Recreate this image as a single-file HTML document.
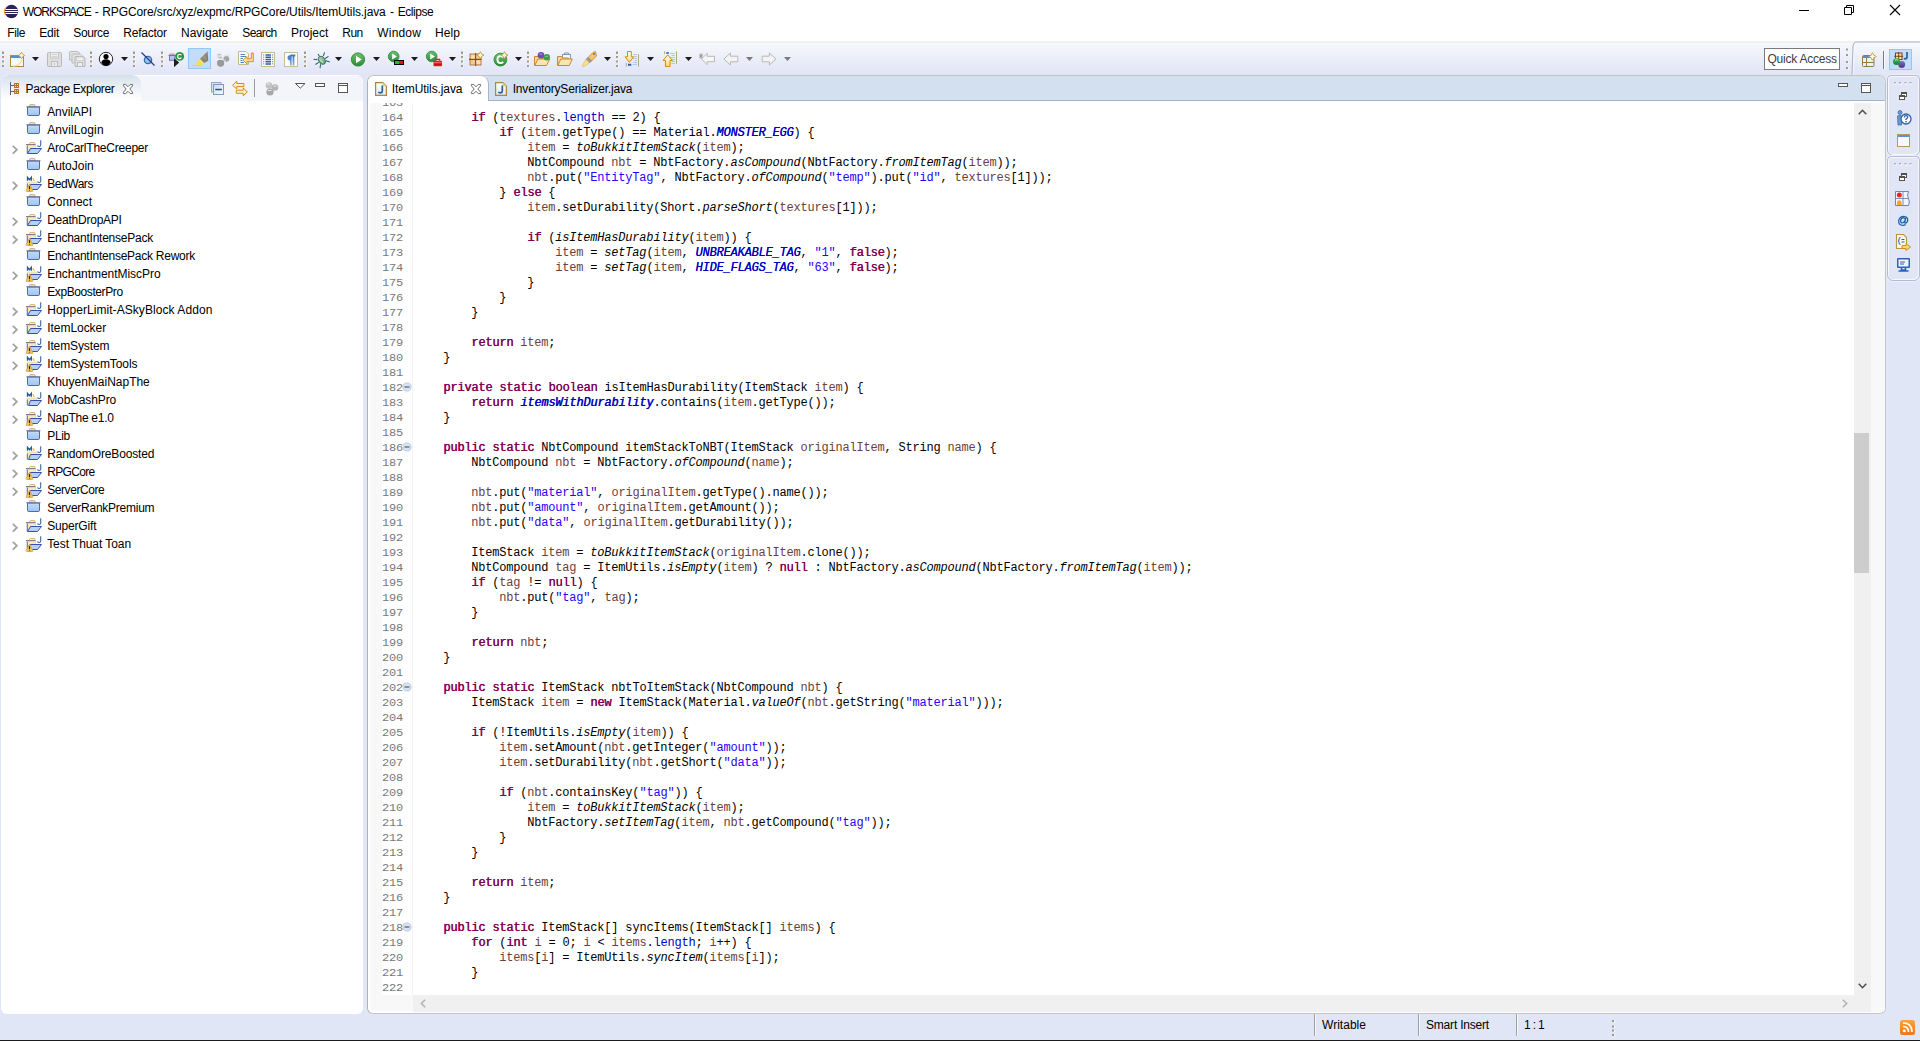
<!DOCTYPE html><html><head><meta charset="utf-8"><title>WORKSPACE - RPGCore/src/xyz/expmc/RPGCore/Utils/ItemUtils.java - Eclipse</title><style>
*{box-sizing:border-box;margin:0;padding:0}
html,body{width:1920px;height:1041px;overflow:hidden;background:#e1e6f6}
body{position:relative;font-family:"Liberation Sans",sans-serif;font-size:12px;color:#000;}
.a{position:absolute}
.t{position:absolute;white-space:pre;line-height:16px;height:16px}
svg{position:absolute;overflow:visible}
#titlebar{left:0;top:0;width:1920px;height:41px;background:#fff}
#toolbar{left:0;top:41px;width:1920px;height:34px;background:linear-gradient(#f1f1ef 0,#f1f1ef 2px,#f7f8fc 2px,#f2f4fc 8px,#ebeef9 18px,#e5e8f7 26px,#e1e5f5 34px)}
#pe{left:1px;top:75px;width:362px;height:939px;background:#fff;border-radius:7px 7px 6px 6px;overflow:hidden}
#pehead{left:0;top:0;width:362px;height:26px;background:#f4f5fb;border-top:1px solid #fcfcfe}
#petab{left:0;top:0;width:140px;height:26px;background:linear-gradient(#d6e0eb,#e6ecf3 35%,#f6f8fb 70%,#ffffff);border-radius:7px 9px 0 0}
#ed{left:367px;top:75px;width:1519px;height:939px;background:#fff;border:1px solid #c4c4c4;border-left-color:#b0b0b0;border-radius:7px 7px 6px 6px;overflow:hidden}
#edhead{left:0;top:0;width:1517px;height:25px;background:#d2e0f0;border-bottom:1px solid #a6b4cc}
#edtab{left:0;top:0;width:121px;height:25px;background:#fff;border-right:1px solid #a6b4cc;border-radius:0 8px 0 0}
#gutter{left:2px;top:27px;width:12px;height:892px;background:#f8f8f8}
#code{left:0;top:27px;width:1485px;height:892px;overflow:hidden}
.ln{position:absolute;left:14px;width:24px;height:15px;line-height:15px;font-family:"Liberation Mono",monospace;font-size:12px;letter-spacing:-0.2px;color:#787878;white-space:pre;transform:scaleY(0.910);transform-origin:0 10.700px}
.cl{position:absolute;left:47.300px;height:15px;line-height:15px;font-family:"Liberation Mono",monospace;font-size:12px;letter-spacing:-0.2px;color:#000;white-space:pre;tab-size:4}
.k{color:#7f0055;text-shadow:0.400px 0 0 #7f0055}
.s{color:#2a00ff}
.f{color:#0000c0}
.c{color:#0000c0;font-style:italic;text-shadow:0.400px 0 0 #0000c0}
.v{color:#6a3e3e}
.i{font-style:italic}
#vsb{left:1486px;top:27px;width:17px;height:892px;background:#f0f0f0}
#ovr{left:1503px;top:27px;width:14px;height:909px;background:#f8f8f8}
#hsb{left:45px;top:919px;width:1458px;height:17px;background:#f0f0f0}
#gutter2{left:2px;top:919px;width:43px;height:16px;background:#f8f8f8}
#thumb{left:1486px;top:357px;width:15px;height:140px;background:#cdcdcd}
#status{left:0;top:1014px;width:1920px;height:26px}
#bottomline{left:0;top:1040px;width:1920px;height:1px;background:#1b1b1b}
.tr{position:absolute;left:46px;height:18px;line-height:18px;white-space:pre}
.sep{position:absolute;width:1px;background:#a0a0a0}
</style></head><body><div class="a" id="titlebar"><svg style="left:3.5px;top:4px" width="16" height="16" viewBox="0 0 16 16"><circle cx="7.500" cy="7.500" r="6.700" fill="#2c2255"/><path d="M1.700 4Q-0.800 7.500 1.700 11" stroke="#f7941e" stroke-width="1.300" fill="none"/><path d="M1.600 5.500h12M1 7.500h13.200M1.600 9.500h12" stroke="#fff" stroke-width="1"/></svg><div class="t" style="left:22.7px;top:4px;letter-spacing:-1.014px;">WORKSPACE</div><div class="t" style="left:91.5px;top:4px;"> - </div><div class="t" style="left:102.3px;top:4px;letter-spacing:-0.107px;">RPGCore/src/xyz/expmc/RPGCore/Utils/ItemUtils.java</div><div class="t" style="left:386.7px;top:4px;"> - </div><div class="t" style="left:397.7px;top:4px;letter-spacing:-0.441px;">Eclipse</div><svg style="left:1794px;top:0" width="126" height="22" viewBox="0 0 126 22"><path d="M5 10.5h10" stroke="#000" stroke-width="1" fill="none"/><path d="M50.500 7.500h7v7h-7zM52.500 7.500v-2h7v7h-2" stroke="#000" stroke-width="1" fill="none"/><path d="M96 5l10 10M106 5l-10 10" stroke="#000" stroke-width="1.1" fill="none"/></svg><div class="t" style="left:7.3px;top:24.5px;letter-spacing:-0.411px;">File</div><div class="t" style="left:39.3px;top:24.5px;letter-spacing:-0.247px;">Edit</div><div class="t" style="left:73.3px;top:24.5px;letter-spacing:-0.389px;">Source</div><div class="t" style="left:123.3px;top:24.5px;letter-spacing:-0.245px;">Refactor</div><div class="t" style="left:181px;top:24.5px;letter-spacing:-0.009px;">Navigate</div><div class="t" style="left:242.3px;top:24.5px;letter-spacing:-0.605px;">Search</div><div class="t" style="left:291px;top:24.5px;letter-spacing:-0.008px;">Project</div><div class="t" style="left:342.3px;top:24.5px;letter-spacing:-0.539px;">Run</div><div class="t" style="left:377.3px;top:24.5px;letter-spacing:0.169px;">Window</div><div class="t" style="left:435px;top:24.5px;letter-spacing:0.078px;">Help</div></div><div class="a" id="toolbar"><svg style="left:1.5px;top:10px" width="3" height="17" viewBox="0 0 3 17"><rect x="0" y="0.5" width="2" height="2.5" fill="#a59c86"/><rect x="2" y="1.0" width="1" height="2.5" fill="#f8f9fd"/><rect x="0" y="5" width="2" height="2" fill="#a59c86"/><rect x="2" y="5.5" width="1" height="2" fill="#f8f9fd"/><rect x="0" y="9.5" width="2" height="2" fill="#a59c86"/><rect x="2" y="10.0" width="1" height="2" fill="#f8f9fd"/><rect x="0" y="14" width="2" height="2" fill="#a59c86"/><rect x="2" y="14.5" width="1" height="2" fill="#f8f9fd"/></svg><svg style="left:10px;top:10px" width="16" height="16" viewBox="0 0 16 16"><rect x="0.500" y="4.500" width="13" height="11" fill="#f4faff" stroke="#b08b3e"/><rect x="1" y="5" width="12" height="2" fill="#4f8fd6"/><path d="M3 15q7 0 9.500-6.500" stroke="#f4e2a4" stroke-width="1.500" fill="none"/><path d="M11.500 1.300l1.200 2l2 1.200l-2 1.200l-1.200 2l-1.200-2l-2-1.200l2-1.200z" fill="#fff8d8" stroke="#c39a2e" stroke-width="0.900"/></svg><svg style="left:32px;top:16px" width="7" height="4" viewBox="0 0 7 4"><path d="M0 0h7l-3.500 4z" fill="#1a1a1a"/></svg><svg style="left:47px;top:10px" width="16" height="16" viewBox="0 0 16 16"><path d="M1.500 1.500h12q1 0 1 1v12q0 1-1 1h-12q-1 0-1-1v-12q0-1 1-1z" fill="#dedede" stroke="#b8b8b8"/><rect x="3.500" y="1.500" width="8" height="5.500" fill="#ececec" stroke="#c6c6c6"/><path d="M5 3.500h5M5 5.500h5" stroke="#d2d2d2"/><rect x="4.500" y="10.500" width="6" height="5" fill="#e9e9e9" stroke="#bdbdbd"/><rect x="7" y="12" width="1" height="2" fill="#c0c0c0"/></svg><svg style="left:69px;top:10px" width="16" height="16" viewBox="0 0 16 16"><path d="M1 0.500h8l1.500 1.500v7h-10v-8z" fill="#e3e3e3" stroke="#bcbcbc"/><path d="M3.500 3h8l1.500 1.500v7.500h-10v-8.500z" fill="#e3e3e3" stroke="#bcbcbc"/><path d="M6.500 5.500h8l1.500 1.500v8.500h-10v-9.500z" fill="#dedede" stroke="#b5b5b5"/><rect x="8" y="6" width="6" height="3.500" fill="#efefef" stroke="#c8c8c8" stroke-width="0.600"/><rect x="8.500" y="11.500" width="5" height="4" fill="#ededed" stroke="#bdbdbd"/></svg><svg style="left:90.0px;top:10px" width="3" height="17" viewBox="0 0 3 17"><rect x="0" y="0.5" width="2" height="2.5" fill="#a59c86"/><rect x="2" y="1.0" width="1" height="2.5" fill="#f8f9fd"/><rect x="0" y="5" width="2" height="2" fill="#a59c86"/><rect x="2" y="5.5" width="1" height="2" fill="#f8f9fd"/><rect x="0" y="9.5" width="2" height="2" fill="#a59c86"/><rect x="2" y="10.0" width="1" height="2" fill="#f8f9fd"/><rect x="0" y="14" width="2" height="2" fill="#a59c86"/><rect x="2" y="14.5" width="1" height="2" fill="#f8f9fd"/></svg><svg style="left:98px;top:10px" width="16" height="16" viewBox="0 0 16 16"><circle cx="8" cy="8" r="6.700" fill="#fff" stroke="#2a2a2a" stroke-width="1"/><circle cx="8" cy="5.600" r="2.600" fill="#000"/><path d="M3.300 11.800q0.300-3.600 4.700-3.600t4.700 3.600q-1.800 2.900-4.700 2.900t-4.700-2.900z" fill="#000"/></svg><svg style="left:121px;top:16px" width="7" height="4" viewBox="0 0 7 4"><path d="M0 0h7l-3.500 4z" fill="#1a1a1a"/></svg><svg style="left:133.0px;top:10px" width="3" height="17" viewBox="0 0 3 17"><rect x="0" y="0.5" width="2" height="2.5" fill="#a59c86"/><rect x="2" y="1.0" width="1" height="2.5" fill="#f8f9fd"/><rect x="0" y="5" width="2" height="2" fill="#a59c86"/><rect x="2" y="5.5" width="1" height="2" fill="#f8f9fd"/><rect x="0" y="9.5" width="2" height="2" fill="#a59c86"/><rect x="2" y="10.0" width="1" height="2" fill="#f8f9fd"/><rect x="0" y="14" width="2" height="2" fill="#a59c86"/><rect x="2" y="14.5" width="1" height="2" fill="#f8f9fd"/></svg><svg style="left:140px;top:10px" width="16" height="16" viewBox="0 0 16 16"><circle cx="8" cy="9" r="3.600" fill="#9ec6e6" stroke="#2e6fb0" stroke-width="1.400"/><path d="M1.500 1.500L14.500 14.500" stroke="#2a3a8c" stroke-width="1.200"/></svg><svg style="left:161.0px;top:10px" width="3" height="17" viewBox="0 0 3 17"><rect x="0" y="0.5" width="2" height="2.5" fill="#a59c86"/><rect x="2" y="1.0" width="1" height="2.5" fill="#f8f9fd"/><rect x="0" y="5" width="2" height="2" fill="#a59c86"/><rect x="2" y="5.5" width="1" height="2" fill="#f8f9fd"/><rect x="0" y="9.5" width="2" height="2" fill="#a59c86"/><rect x="2" y="10.0" width="1" height="2" fill="#f8f9fd"/><rect x="0" y="14" width="2" height="2" fill="#a59c86"/><rect x="2" y="14.5" width="1" height="2" fill="#f8f9fd"/></svg><svg style="left:168px;top:10px" width="16" height="16" viewBox="0 0 16 16"><path d="M1.500 3h5" stroke="#d9a3ab" stroke-width="1.200"/><rect x="1.500" y="4.300" width="5.500" height="5" fill="#b7c3ec" stroke="#7d74b4"/><path d="M0.600 4.300h7.400" stroke="#6f679f"/><path d="M6 7.300v9l5.200-4.700z" fill="#1e1e1e"/><circle cx="11.700" cy="5.400" r="4.400" fill="#2f9a46"/><circle cx="11.700" cy="5.400" r="3.300" fill="none" stroke="#1f7a34" stroke-width="0.500"/><path d="M13.400 4.200q-0.600-1-1.800-1q-1.900 0-1.900 2.200t1.900 2.200q1.200 0 1.800-1" stroke="#fff" stroke-width="1.100" fill="none"/></svg><div class="a" style="left:188px;top:7px;width:23px;height:21px;background:#c3dcf8;border:1px solid #90c8f6"></div><svg style="left:192px;top:10px" width="16" height="16" viewBox="0 0 16 16"><defs><linearGradient id="gHL_8" x1="0" y1="0" x2="1" y2="1"><stop offset="0" stop-color="#a39c88"/><stop offset="1" stop-color="#7d7868"/></linearGradient></defs><path d="M15.700 0.200l0.600 9.600l-4.400 2.200l-4.100-4z" fill="url(#gHL_8)"/><path d="M12.200 5.300l1.600 3.400" stroke="#b8b29e" stroke-width="0.700"/><path d="M7.800 8l4.100 4l-2.100 2.600l-5.300 0.200l-0.700-2z" fill="#f8de55"/><path d="M8.500 9.500l2.500 2.500" stroke="#fcf0a0" stroke-width="0.800"/><path d="M0.300 14.500h9.500" stroke="#f2d040" stroke-width="1.200"/></svg><svg style="left:216px;top:10px" width="16" height="16" viewBox="0 0 16 16"><circle cx="3.300" cy="4.900" r="2.500" fill="#dedede"/><path d="M1.500 3.500h3.500" stroke="#bdbdbd" stroke-width="1"/><circle cx="10.400" cy="7.800" r="2.900" fill="#a3a3a3"/><path d="M9 4l1.200 1.400M11.500 3.500l1 1.500" stroke="#c8c8c8" stroke-width="0.900"/><path d="M8.300 8.800l1.500 1.200" stroke="#eef0f8" stroke-width="0.900"/><circle cx="4.600" cy="12.100" r="3.600" fill="#999"/><path d="M2.300 8.300h4.300" stroke="#f2f3f9" stroke-width="1.100"/><path d="M2.800 6.800h3.600" stroke="#a8a8a8" stroke-width="0.900"/></svg><svg style="left:238px;top:10px" width="16" height="16" viewBox="0 0 16 16"><path d="M0.500 0.500h7.500l2.500 2.500v10.500h-10z" fill="#fdfbf2" stroke="#c8b88a"/><path d="M2.500 3.500h4.500M2.500 5.500h5.500M2.500 7.500h2.500M2.500 9.500h2M2.500 11.500h3.500" stroke="#5b7fc2" stroke-width="1"/><path d="M13.300 2v5.800h-4.300v-2.300l-4 3.700l4 3.700v-2.300h6.300v-8.600z" fill="#fde3a0" stroke="#cc8a14" stroke-width="0.900" stroke-linejoin="round"/></svg><svg style="left:260px;top:10px" width="16" height="16" viewBox="0 0 16 16"><rect x="1.500" y="1.500" width="13" height="14" fill="#fdfcf6" stroke="#c9b98a"/><path d="M3.700 3.500v11M12.700 3.500v11" stroke="#3d6cc0" stroke-width="1" stroke-dasharray="1 1.200"/><path d="M5.500 4h5.500M5.500 6.250h5.500M5.500 8.500h5.500M5.500 10.750h5.500M5.500 13h5.500" stroke="#2f5cb0" stroke-width="1.500"/></svg><svg style="left:283px;top:10px" width="16" height="16" viewBox="0 0 16 16"><defs><linearGradient id="gPIL_12" x1="0" y1="0" x2="0" y2="1"><stop offset="0" stop-color="#3f78c4"/><stop offset="1" stop-color="#8fb4e0"/></linearGradient></defs><rect x="1.500" y="1.500" width="13" height="14" fill="#fdfdfb" stroke="#c9bc94"/><path d="M12.300 4.500H7.500M7.800 4.500v10M10.500 4.500v10" stroke="url(#gPIL_12)" stroke-width="1.800" fill="none"/><path d="M7.800 4q-3.300 0-3.300 2.700T7.800 9.400z" fill="#4a82c8"/></svg><svg style="left:304.0px;top:10px" width="3" height="17" viewBox="0 0 3 17"><rect x="0" y="0.5" width="2" height="2.5" fill="#a59c86"/><rect x="2" y="1.0" width="1" height="2.5" fill="#f8f9fd"/><rect x="0" y="5" width="2" height="2" fill="#a59c86"/><rect x="2" y="5.5" width="1" height="2" fill="#f8f9fd"/><rect x="0" y="9.5" width="2" height="2" fill="#a59c86"/><rect x="2" y="10.0" width="1" height="2" fill="#f8f9fd"/><rect x="0" y="14" width="2" height="2" fill="#a59c86"/><rect x="2" y="14.5" width="1" height="2" fill="#f8f9fd"/></svg><svg style="left:312px;top:10px" width="16" height="16" viewBox="0 0 16 16"><defs><linearGradient id="gBUG_13" x1="0" y1="0" x2="0" y2="1"><stop offset="0" stop-color="#a6cf9c"/><stop offset="1" stop-color="#6fae78"/></linearGradient></defs><g transform="rotate(-32 9.700 9)"><path d="M9.700 5V2M6.200 6.500l-3-2.500M13.200 6.500l3-2.500M6 9.500h-4M13.400 9.500h4M6.500 12l-2.500 3M12.900 12l2.500 3" stroke="#2c5a60" stroke-width="1" fill="none"/><ellipse cx="9.700" cy="9.300" rx="3" ry="4.200" fill="url(#gBUG_13)" stroke="#2e6a7a" stroke-width="1"/><path d="M8.200 6.500q0.300 3 1.300 5.500" stroke="#e4f2dc" stroke-width="0.800" fill="none"/></g></svg><svg style="left:335px;top:16px" width="7" height="4" viewBox="0 0 7 4"><path d="M0 0h7l-3.500 4z" fill="#1a1a1a"/></svg><svg style="left:350px;top:10px" width="16" height="16" viewBox="0 0 16 16"><defs><linearGradient id="gRUN_14" x1="0" y1="0" x2="0" y2="1"><stop offset="0" stop-color="#6cc56e"/><stop offset="1" stop-color="#2a8a34"/></linearGradient></defs><circle cx="8" cy="8.500" r="6.600" fill="url(#gRUN_14)" stroke="#2f8a3a" stroke-width="1"/><path d="M6 4.700v7.600l5.800-3.800z" fill="#fff"/></svg><svg style="left:373px;top:16px" width="7" height="4" viewBox="0 0 7 4"><path d="M0 0h7l-3.500 4z" fill="#1a1a1a"/></svg><svg style="left:387.5px;top:10px" width="16" height="16" viewBox="0 0 16 16"><defs><linearGradient id="gRUN_15" x1="0" y1="0" x2="0" y2="1"><stop offset="0" stop-color="#6cc56e"/><stop offset="1" stop-color="#2a8a34"/></linearGradient></defs><circle cx="5.700" cy="5.500" r="5.300" fill="url(#gRUN_15)" stroke="#2f8a3a" stroke-width="0.900"/><path d="M4.200 2.600v5.800l4.700-2.900z" fill="#fff"/><rect x="6" y="9" width="10" height="5" fill="#000"/><rect x="7" y="10" width="4" height="3" fill="#19c12b"/><rect x="11" y="10" width="4" height="3" fill="#e31010"/></svg><svg style="left:411px;top:16px" width="7" height="4" viewBox="0 0 7 4"><path d="M0 0h7l-3.500 4z" fill="#1a1a1a"/></svg><svg style="left:426px;top:10px" width="16" height="16" viewBox="0 0 16 16"><defs><linearGradient id="gRUN_16" x1="0" y1="0" x2="0" y2="1"><stop offset="0" stop-color="#6cc56e"/><stop offset="1" stop-color="#2a8a34"/></linearGradient></defs><circle cx="5.700" cy="5.500" r="5.300" fill="url(#gRUN_16)" stroke="#2f8a3a" stroke-width="0.900"/><path d="M4.200 2.600v5.800l4.700-2.900z" fill="#fff"/><rect x="7.500" y="9.800" width="8.500" height="5.400" rx="0.800" fill="#e5171c"/><path d="M9.800 9.800v-1.400h3.900v1.400" stroke="#e5171c" stroke-width="1.100" fill="none"/><path d="M8 11.600h7.500" stroke="#ff9a9a" stroke-width="0.700"/><path d="M8 13.500h7.500" stroke="#b80f14" stroke-width="0.700"/></svg><svg style="left:449px;top:16px" width="7" height="4" viewBox="0 0 7 4"><path d="M0 0h7l-3.500 4z" fill="#1a1a1a"/></svg><svg style="left:461.0px;top:10px" width="3" height="17" viewBox="0 0 3 17"><rect x="0" y="0.5" width="2" height="2.5" fill="#a59c86"/><rect x="2" y="1.0" width="1" height="2.5" fill="#f8f9fd"/><rect x="0" y="5" width="2" height="2" fill="#a59c86"/><rect x="2" y="5.5" width="1" height="2" fill="#f8f9fd"/><rect x="0" y="9.5" width="2" height="2" fill="#a59c86"/><rect x="2" y="10.0" width="1" height="2" fill="#f8f9fd"/><rect x="0" y="14" width="2" height="2" fill="#a59c86"/><rect x="2" y="14.5" width="1" height="2" fill="#f8f9fd"/></svg><svg style="left:468px;top:10px" width="16" height="16" viewBox="0 0 16 16"><rect x="2" y="3" width="11" height="11" fill="#eccb96" stroke="#b0703a" stroke-width="0.900"/><path d="M7.600 2v13M1 8.400h12.500" stroke="#8a4a1c" stroke-width="1.100"/><rect x="3" y="4" width="3.600" height="3.500" fill="#f5dfb6"/><rect x="8.700" y="9.500" width="3.500" height="3.500" fill="#f5dfb6"/><path d="M12.400 0.700l1.200 2.300l2.300 1.200l-2.300 1.200l-1.200 2.300l-1.200-2.300l-2.300-1.200l2.300-1.200z" fill="#fff6d0" stroke="#c39a2e" stroke-width="0.900"/><path d="M12.400 2.500v3.400M10.700 4.200h3.400" stroke="#fff" stroke-width="0.900"/></svg><svg style="left:492px;top:10px" width="16" height="16" viewBox="0 0 16 16"><defs><linearGradient id="gRUN_18" x1="0" y1="0" x2="0" y2="1"><stop offset="0" stop-color="#6cc56e"/><stop offset="1" stop-color="#2a8a34"/></linearGradient></defs><circle cx="8.400" cy="8.600" r="6.400" fill="url(#gRUN_18)" stroke="#2f8a3a" stroke-width="0.900"/><path d="M11.200 6.400q-1-1.300-2.800-1.300q-3 0-3 3.500t3 3.500q1.800 0 2.800-1.300" stroke="#fff" stroke-width="1.900" fill="none"/><path d="M12.400 0.700l1.200 2.300l2.300 1.200l-2.300 1.200l-1.200 2.300l-1.200-2.300l-2.300-1.200l2.300-1.200z" fill="#fff6d0" stroke="#c39a2e" stroke-width="0.900"/><path d="M12.400 2.500v3.400M10.700 4.200h3.400" stroke="#fff" stroke-width="0.900"/></svg><svg style="left:515px;top:16px" width="7" height="4" viewBox="0 0 7 4"><path d="M0 0h7l-3.500 4z" fill="#1a1a1a"/></svg><svg style="left:527.0px;top:10px" width="3" height="17" viewBox="0 0 3 17"><rect x="0" y="0.5" width="2" height="2.5" fill="#a59c86"/><rect x="2" y="1.0" width="1" height="2.5" fill="#f8f9fd"/><rect x="0" y="5" width="2" height="2" fill="#a59c86"/><rect x="2" y="5.5" width="1" height="2" fill="#f8f9fd"/><rect x="0" y="9.5" width="2" height="2" fill="#a59c86"/><rect x="2" y="10.0" width="1" height="2" fill="#f8f9fd"/><rect x="0" y="14" width="2" height="2" fill="#a59c86"/><rect x="2" y="14.5" width="1" height="2" fill="#f8f9fd"/></svg><svg style="left:534px;top:10px" width="16" height="16" viewBox="0 0 16 16"><path d="M0.500 5.500h4l1 1.500h6v7.500h-11z" fill="#f6d89a" stroke="#c98a2e"/><path d="M0.800 14.500l3-6.500h12l-3.300 6.500z" fill="#fbe5b0" stroke="#c98a2e" stroke-linejoin="round"/><circle cx="7" cy="4.200" r="3.300" fill="#6a4fb0"/><circle cx="12.800" cy="6.300" r="3.200" fill="#3f9a4a"/><path d="M5.300 3.200h3M11.200 5.300h3" stroke="#d5ccf2" stroke-width="0.900" opacity="0.700"/></svg><svg style="left:557px;top:10px" width="16" height="16" viewBox="0 0 16 16"><rect x="5.500" y="3.500" width="8" height="6" fill="#f6f9ff" stroke="#7f95c0"/><path d="M7.500 3.500v-1.500h4v1.500" stroke="#7f95c0" fill="none"/><path d="M0.500 5.500h4l1 1.500h6v7.500h-11z" fill="#f6d89a" stroke="#c98a2e"/><path d="M0.800 14.500l3-6.500h11.500l-3 6.500z" fill="#fbe5b0" stroke="#c98a2e" stroke-linejoin="round"/></svg><svg style="left:581px;top:10px" width="16" height="16" viewBox="0 0 16 16"><path d="M14.500 0.500l1 4.500l-5 5l-3.500-3.500l5-5z" fill="#f7c66a" stroke="#c98a2e" stroke-width="0.900"/><circle cx="13" cy="3" r="0.900" fill="#3a63b8"/><path d="M7 6.500l3.500 3.500l-2 2l-3.500-3.500z" fill="#9a9aa0" stroke="#77777d" stroke-width="0.600"/><path d="M5 8.500l3.500 3.500l-6.500 4l-1-1z" fill="#fbe08a" stroke="#e3b84a" stroke-width="0.600"/></svg><svg style="left:604px;top:16px" width="7" height="4" viewBox="0 0 7 4"><path d="M0 0h7l-3.500 4z" fill="#1a1a1a"/></svg><svg style="left:616.0px;top:10px" width="3" height="17" viewBox="0 0 3 17"><rect x="0" y="0.5" width="2" height="2.5" fill="#a59c86"/><rect x="2" y="1.0" width="1" height="2.5" fill="#f8f9fd"/><rect x="0" y="5" width="2" height="2" fill="#a59c86"/><rect x="2" y="5.5" width="1" height="2" fill="#f8f9fd"/><rect x="0" y="9.5" width="2" height="2" fill="#a59c86"/><rect x="2" y="10.0" width="1" height="2" fill="#f8f9fd"/><rect x="0" y="14" width="2" height="2" fill="#a59c86"/><rect x="2" y="14.5" width="1" height="2" fill="#f8f9fd"/></svg><svg style="left:625px;top:10px" width="16" height="16" viewBox="0 0 16 16"><defs><linearGradient id="gARR_22" x1="0" y1="0" x2="0" y2="1"><stop offset="0" stop-color="#ffffff"/><stop offset="1" stop-color="#fbd87a"/></linearGradient></defs><path d="M13.500 3.200v12.400M1.300 11.800v3.800" stroke="#a8ad7c" stroke-width="1"/><path d="M8.200 3.500h3.800M9.500 5.500h2.500M8.200 7.500h3.800M9.500 9.500h2.500M8.200 11.500h3.800M7.500 13.500h4.500" stroke="#b4c4e2" stroke-width="1"/><rect x="3" y="12.800" width="3.300" height="2" fill="#2f5fb8"/><path d="M2.500 0.500h3.800v5.300h2.400l-4.300 5.500l-4.300-5.500h2.400z" fill="url(#gARR_22)" stroke="#d28a10" stroke-width="1" stroke-linejoin="round"/></svg><svg style="left:647px;top:16px" width="7" height="4" viewBox="0 0 7 4"><path d="M0 0h7l-3.500 4z" fill="#1a1a1a"/></svg><svg style="left:662px;top:10px" width="16" height="16" viewBox="0 0 16 16"><defs><linearGradient id="gARR_23" x1="0" y1="0" x2="0" y2="1"><stop offset="0" stop-color="#ffffff"/><stop offset="1" stop-color="#fbd87a"/></linearGradient></defs><path d="M2.600 0.300v2.900M14.500 0.300v12.500" stroke="#a8ad7c" stroke-width="1"/><rect x="4.300" y="1.200" width="2.500" height="1.600" fill="#2f5fb8"/><path d="M8.100 2.500h4.800M9.500 4.500h3.400M8.100 6.500h4.800M9.500 8.500h3.400M9.500 10.500h3.400M9.500 12.500h3.400" stroke="#b4c4e2" stroke-width="1"/><path d="M5.750 3.800l4.700 5.600h-2.400v6.100h-4.600v-6.100h-2.400z" fill="url(#gARR_23)" stroke="#d28a10" stroke-width="1" stroke-linejoin="round"/></svg><svg style="left:685px;top:16px" width="7" height="4" viewBox="0 0 7 4"><path d="M0 0h7l-3.500 4z" fill="#1a1a1a"/></svg><svg style="left:699px;top:10px" width="16" height="16" viewBox="0 0 16 16"><path d="M2.100 2.200v5.800M0 3.500l4.200 3.200M4.200 3.500l-4.200 3.200" stroke="#8e8e8e" stroke-width="0.900"/><path d="M2.500 8l5.700-5.700v3h7.300v5.400h-7.300v3z" fill="#f6f6f6" stroke="#b8b8b8" stroke-linejoin="round"/></svg><svg style="left:723px;top:10px" width="16" height="16" viewBox="0 0 16 16"><path d="M0.900 8l6.500-6v3.200h7.400v5.600h-7.400v3.200z" fill="#f4f4f4" stroke="#b8b8b8" stroke-linejoin="round"/></svg><svg style="left:746px;top:16px" width="7" height="4" viewBox="0 0 7 4"><path d="M0 0h7l-3.500 4z" fill="#7a7a7a"/></svg><svg style="left:762px;top:10px" width="16" height="16" viewBox="0 0 16 16"><path d="M13.900 8l-6.500-6v3.200h-7.200v5.600h7.200v3.200z" fill="#f4f4f4" stroke="#b8b8b8" stroke-linejoin="round"/></svg><svg style="left:784px;top:16px" width="7" height="4" viewBox="0 0 7 4"><path d="M0 0h7l-3.500 4z" fill="#7a7a7a"/></svg><div class="a" style="left:1764px;top:7px;width:76px;height:22px;background:#fff;border:1px solid #7a7a7a"></div><div class="t" style="left:1767.5px;top:9.5px;letter-spacing:-0.236px;color:#404040;">Quick Access</div><svg style="left:1846px;top:7px" width="3" height="22" viewBox="0 0 3 22"><rect x="0" y="0.5" width="2" height="2" fill="#a59c86"/><rect x="2" y="1.0" width="1" height="2" fill="#f8f9fd"/><rect x="0" y="6" width="2" height="2" fill="#a59c86"/><rect x="2" y="6.5" width="1" height="2" fill="#f8f9fd"/><rect x="0" y="13" width="2" height="2" fill="#a59c86"/><rect x="2" y="13.5" width="1" height="2" fill="#f8f9fd"/><rect x="0" y="19" width="2" height="2" fill="#a59c86"/><rect x="2" y="19.5" width="1" height="2" fill="#f8f9fd"/></svg><svg style="left:1848px;top:0" width="72" height="34" viewBox="0 0 72 34"><path d="M5 34L6 5q0.200-3.500 3-4H72" stroke="#fbfcff" fill="none"/><path d="M4 34L5 5q0.200-3.500 3-4H72" stroke="#aab0c6" fill="none"/><path d="M35.500 10v18" stroke="#7c7c84"/><path d="M36.500 10v18" stroke="#f6f8fd"/></svg><svg style="left:1860px;top:10px" width="16" height="16" viewBox="0 0 16 16"><rect x="2.500" y="4.500" width="11.500" height="11" rx="1" fill="#e2f3fc" stroke="#8f7f3e"/><path d="M3 5h10.500v2h-10.500z" fill="#4f8fd8"/><path d="M6.500 7v8.500M2.500 11.500h11.500" stroke="#8f7f3e"/><path d="M12.500 1.700l1.300 2.500l2.500 1.300l-2.500 1.300l-1.300 2.500l-1.300-2.500l-2.500-1.300l2.500-1.300z" fill="#fffbe6" stroke="#c39a2e" stroke-width="0.900"/><path d="M12.500 3.700v3.600M10.700 5.500h3.600" stroke="#fff" stroke-width="1"/></svg><div class="a" style="left:1889px;top:8px;width:23px;height:21px;background:#c3dcf8;border:1px solid #90c8f6"></div><svg style="left:1892px;top:10px" width="16" height="16" viewBox="0 0 16 16"><defs><linearGradient id="gPUR_28" x1="0" y1="0" x2="0" y2="1"><stop offset="0" stop-color="#8a6fc8"/><stop offset="1" stop-color="#4a2f8a"/></linearGradient><linearGradient id="gGRN_28" x1="0" y1="0" x2="0" y2="1"><stop offset="0" stop-color="#5ab868"/><stop offset="1" stop-color="#1f7a30"/></linearGradient></defs><rect x="3.500" y="2" width="6.500" height="6.500" fill="#fbe3a0" stroke="#7a3e1c" stroke-width="1"/><path d="M6.700 1v8M2.200 5.300h9" stroke="#7a3e1c" stroke-width="1"/><path d="M15 1v4.800q0 2-1.800 2q-1 0-1.400-0.400" stroke="#2a5f9c" stroke-width="1.700" fill="none"/><circle cx="9.700" cy="13.400" r="3.400" fill="url(#gPUR_28)"/><circle cx="4.500" cy="10.500" r="3.500" fill="url(#gGRN_28)"/><path d="M3 9.300q1.500-1.300 3 0" stroke="#bfe6c4" stroke-width="0.900" fill="none"/></svg></div><div class="a" id="pe"><div class="a" id="pehead"></div><div class="a" id="petab"></div><svg style="left:8px;top:5px" width="16" height="16" viewBox="0 0 16 16"><path d="M1.500 2v13M2 5.500h3M2 11.500h3" stroke="#5a6378" stroke-width="1" fill="none"/><rect x="5" y="3" width="5" height="5" rx="0.500" fill="#bd6e2e"/><rect x="5" y="9" width="5" height="5" rx="0.500" fill="#bd6e2e"/><path d="M6 4h1v1h-1zM8 4h1v1h-1zM6 6h1v1h-1zM8 6h1v1h-1zM6 10h1v1h-1zM8 10h1v1h-1zM6 12h1v1h-1zM8 12h1v1h-1z" fill="#f3d9b4"/></svg><div class="t" style="left:24.6px;top:6px;letter-spacing:-0.370px;">Package Explorer</div><svg style="left:121.500px;top:9px" width="10" height="10" viewBox="0 0 11 11"><path d="M0.500 0.500h2.500l2.500 2.500l2.500 -2.500h2.500v1.500l-3 3.500l3 3.500v1.500h-2.500l-2.500 -2.500l-2.500 2.500h-2.500v-1.500l3 -3.500l-3 -3.500z" stroke="#5f5f5f" stroke-width="1" fill="#fff" stroke-linejoin="miter"/></svg><svg style="left:209px;top:6px" width="16" height="16" viewBox="0 0 16 16"><defs><linearGradient id="gCA_30" x1="0" y1="0" x2="1" y2="1"><stop offset="0" stop-color="#bfdfe6"/><stop offset="1" stop-color="#fafcfd"/></linearGradient></defs><rect x="1.500" y="1.500" width="9.500" height="9.500" fill="#d4e6ea" stroke="#95a5c2"/><rect x="3.500" y="3.500" width="10" height="10" fill="url(#gCA_30)" stroke="#8598bc"/><path d="M5.300 8.500h6.600" stroke="#1f4f9c" stroke-width="1.300"/></svg><svg style="left:231px;top:5px" width="16" height="16" viewBox="0 0 16 16"><path d="M0.600 5.300l4.200-4.200v2.400h7.100v3.100h-7.100v2.400z" fill="#fdf0c0" stroke="#cc8f14" stroke-width="1" stroke-linejoin="round"/><path d="M15.400 12l-4.200-4.200v2.400h-6.900v3.100h6.900v2.400z" fill="#fdf0c0" stroke="#cc8f14" stroke-width="1" stroke-linejoin="round"/></svg><div class="sep" style="left:253px;top:4px;height:18px;background:#9a9a9a"></div><svg style="left:262.5px;top:6px" width="16" height="16" viewBox="0 0 16 16"><circle cx="5" cy="4.500" r="3.300" fill="#c2c2c2"/><circle cx="11" cy="6.500" r="3.300" fill="#b5b5b5"/><circle cx="6" cy="11" r="3.600" fill="#a7a7a7"/><path d="M3 3h3M9.500 5h3M4 9.500h3.500" stroke="#e6e6e6" stroke-width="1"/></svg><svg style="left:294px;top:8px" width="11" height="6" viewBox="0 0 11 6"><path d="M0.500 0.500h9.500l-4.750 4.700z" fill="#fff" stroke="#555"/></svg><svg style="left:314px;top:8px" width="10" height="4" viewBox="0 0 10 4"><rect x="0.500" y="0.500" width="9" height="3" fill="#fff" stroke="#555"/></svg><svg style="left:337px;top:8px" width="10" height="10" viewBox="0 0 10 10"><rect x="0.500" y="0.500" width="9" height="9" fill="#fff" stroke="#555"/><path d="M0 2.500h10" stroke="#555"/></svg><svg style="left:25px;top:29px" width="16" height="16" viewBox="0 0 16 16"><defs><linearGradient id="gFC_33" x1="0" y1="0" x2="0" y2="1"><stop offset="0" stop-color="#c0dcf9"/><stop offset="1" stop-color="#9fc5f0"/></linearGradient></defs><path d="M3.500 2.500V1.800q0-1.300 1.300-1.300h3q1.300 0 1.300 1.300v0.700z" fill="#f5dfa8" stroke="#b4ad9c" stroke-width="0.900"/><path d="M1.500 3v7.200q0 1.300 1.300 1.300h9.400q1.300 0 1.300 -1.300v-7.200z" fill="url(#gFC_33)" stroke="#4058b4" stroke-width="0.900"/><path d="M0.300 2.800h14.200" stroke="#77768c" stroke-width="1"/></svg><div class="t" style="left:46.2px;top:29px;letter-spacing:-0.070px;">AnvilAPI</div><svg style="left:25px;top:47px" width="16" height="16" viewBox="0 0 16 16"><defs><linearGradient id="gFC_34" x1="0" y1="0" x2="0" y2="1"><stop offset="0" stop-color="#c0dcf9"/><stop offset="1" stop-color="#9fc5f0"/></linearGradient></defs><path d="M3.500 2.500V1.800q0-1.300 1.300-1.300h3q1.300 0 1.300 1.300v0.700z" fill="#f5dfa8" stroke="#b4ad9c" stroke-width="0.900"/><path d="M1.500 3v7.200q0 1.300 1.300 1.300h9.400q1.300 0 1.300 -1.300v-7.200z" fill="url(#gFC_34)" stroke="#4058b4" stroke-width="0.900"/><path d="M0.300 2.800h14.200" stroke="#77768c" stroke-width="1"/></svg><div class="t" style="left:46.2px;top:47px;letter-spacing:0.113px;">AnvilLogin</div><svg style="left:11px;top:69.5px" width="6" height="10" viewBox="0 0 6 10"><path d="M0.800 0.800L4.900 4.700L0.800 8.600" stroke="#a0a0a0" stroke-width="1.700" fill="none"/></svg><svg style="left:25px;top:65px" width="16" height="16" viewBox="0 0 16 16"><path d="M3.500 4.500V3.500q0-1 1-1h3.500q1 0 1 1v1" fill="#fbf0cf" stroke="#d4b06a" stroke-width="0.900"/><path d="M1.200 5h8.500v3.500h-5.200l-3.300 4.500z" fill="#fbe9b8" stroke="#e8cf94" stroke-width="0.600"/><path d="M0 4.600h9.500" stroke="#7b7186" stroke-width="1"/><path d="M1.300 5.500v8" stroke="#4a5cb4" stroke-width="0.900"/><path d="M1.500 13.500h10l4-5h-11z" fill="#b3d2f5" stroke="#3b4fb0" stroke-width="1" stroke-linejoin="round"/><path d="M14.700 0.300v4.700q0 1.500-1.500 1.500q-1.300 0-1.700-1" stroke="#3a6aa2" stroke-width="1.100" fill="none"/></svg><div class="t" style="left:46.2px;top:65px;letter-spacing:-0.225px;">AroCarlTheCreeper</div><svg style="left:25px;top:83px" width="16" height="16" viewBox="0 0 16 16"><defs><linearGradient id="gFC_36" x1="0" y1="0" x2="0" y2="1"><stop offset="0" stop-color="#c0dcf9"/><stop offset="1" stop-color="#9fc5f0"/></linearGradient></defs><path d="M3.500 2.500V1.800q0-1.300 1.300-1.300h3q1.300 0 1.300 1.300v0.700z" fill="#f5dfa8" stroke="#b4ad9c" stroke-width="0.900"/><path d="M1.500 3v7.200q0 1.300 1.300 1.300h9.400q1.300 0 1.300 -1.300v-7.200z" fill="url(#gFC_36)" stroke="#4058b4" stroke-width="0.900"/><path d="M0.300 2.800h14.200" stroke="#77768c" stroke-width="1"/></svg><div class="t" style="left:46.2px;top:83px;letter-spacing:-0.025px;">AutoJoin</div><svg style="left:11px;top:105.5px" width="6" height="10" viewBox="0 0 6 10"><path d="M0.800 0.800L4.900 4.700L0.800 8.600" stroke="#a0a0a0" stroke-width="1.700" fill="none"/></svg><svg style="left:25px;top:101px" width="16" height="16" viewBox="0 0 16 16"><path d="M1.500 6h9v2.500h-6l-3 4.500z" fill="#fbe9b8" stroke="#e8cf94" stroke-width="0.600"/><path d="M1.300 7.500v6" stroke="#4a5cb4" stroke-width="0.900"/><path d="M2.500 13.500h9l4-5h-11z" fill="#b3d2f5" stroke="#3b4fb0" stroke-width="1" stroke-linejoin="round"/><path d="M14.700 0.300v4.700q0 1.500-1.500 1.500q-1.300 0-1.700-1" stroke="#3a6aa2" stroke-width="1.100" fill="none"/><path d="M1.500 4.800v-3.400l1.900 2.300l1.900-2.300v3.400" stroke="#1f5a9a" stroke-width="1.300" fill="none" stroke-linejoin="miter"/><path d="M6.300 2.800h1.400v1.600h1" stroke="#d9b23e" stroke-width="0.900" fill="none"/><path d="M3.500 8.300l3.300 6.200q0.300 1-1 1h-4.600q-1.300 0-1-1z" fill="#f6c654" stroke="#d39a2c" stroke-width="0.800" stroke-linejoin="round"/><path d="M3.500 10.300v2.700M3.500 13.700v0.900" stroke="#2a1c00" stroke-width="1.100"/></svg><div class="t" style="left:46.2px;top:101px;letter-spacing:-0.444px;">BedWars</div><svg style="left:25px;top:119px" width="16" height="16" viewBox="0 0 16 16"><defs><linearGradient id="gFC_38" x1="0" y1="0" x2="0" y2="1"><stop offset="0" stop-color="#c0dcf9"/><stop offset="1" stop-color="#9fc5f0"/></linearGradient></defs><path d="M3.500 2.500V1.800q0-1.300 1.300-1.300h3q1.300 0 1.300 1.300v0.700z" fill="#f5dfa8" stroke="#b4ad9c" stroke-width="0.900"/><path d="M1.500 3v7.200q0 1.300 1.300 1.300h9.400q1.300 0 1.300 -1.300v-7.200z" fill="url(#gFC_38)" stroke="#4058b4" stroke-width="0.900"/><path d="M0.300 2.800h14.200" stroke="#77768c" stroke-width="1"/></svg><div class="t" style="left:46.2px;top:119px;letter-spacing:0.014px;">Connect</div><svg style="left:11px;top:141.5px" width="6" height="10" viewBox="0 0 6 10"><path d="M0.800 0.800L4.900 4.700L0.800 8.600" stroke="#a0a0a0" stroke-width="1.700" fill="none"/></svg><svg style="left:25px;top:137px" width="16" height="16" viewBox="0 0 16 16"><path d="M3.500 4.500V3.500q0-1 1-1h3.500q1 0 1 1v1" fill="#fbf0cf" stroke="#d4b06a" stroke-width="0.900"/><path d="M1.200 5h8.500v3.500h-5.200l-3.300 4.500z" fill="#fbe9b8" stroke="#e8cf94" stroke-width="0.600"/><path d="M0 4.600h9.500" stroke="#7b7186" stroke-width="1"/><path d="M1.300 5.500v8" stroke="#4a5cb4" stroke-width="0.900"/><path d="M1.500 13.500h10l4-5h-11z" fill="#b3d2f5" stroke="#3b4fb0" stroke-width="1" stroke-linejoin="round"/><path d="M14.700 0.300v4.700q0 1.500-1.500 1.500q-1.300 0-1.700-1" stroke="#3a6aa2" stroke-width="1.100" fill="none"/></svg><div class="t" style="left:46.2px;top:137px;letter-spacing:-0.240px;">DeathDropAPI</div><svg style="left:11px;top:159.5px" width="6" height="10" viewBox="0 0 6 10"><path d="M0.800 0.800L4.900 4.700L0.800 8.600" stroke="#a0a0a0" stroke-width="1.700" fill="none"/></svg><svg style="left:25px;top:155px" width="16" height="16" viewBox="0 0 16 16"><path d="M3.500 4.500V3.500q0-1 1-1h3.500q1 0 1 1v1" fill="#fbf0cf" stroke="#d4b06a" stroke-width="0.900"/><path d="M1.200 5h8.500v3.500h-5.200l-3.300 4.500z" fill="#fbe9b8" stroke="#e8cf94" stroke-width="0.600"/><path d="M0 4.600h9.500" stroke="#7b7186" stroke-width="1"/><path d="M1.300 5.500v8" stroke="#4a5cb4" stroke-width="0.900"/><path d="M1.500 13.500h10l4-5h-11z" fill="#b3d2f5" stroke="#3b4fb0" stroke-width="1" stroke-linejoin="round"/><path d="M14.700 0.300v4.700q0 1.500-1.500 1.500q-1.300 0-1.700-1" stroke="#3a6aa2" stroke-width="1.100" fill="none"/><path d="M3.500 8.300l3.300 6.200q0.300 1-1 1h-4.600q-1.300 0-1-1z" fill="#f6c654" stroke="#d39a2c" stroke-width="0.800" stroke-linejoin="round"/><path d="M3.500 10.300v2.700M3.500 13.700v0.900" stroke="#2a1c00" stroke-width="1.100"/></svg><div class="t" style="left:46.2px;top:155px;letter-spacing:-0.238px;">EnchantIntensePack</div><svg style="left:25px;top:173px" width="16" height="16" viewBox="0 0 16 16"><defs><linearGradient id="gFC_41" x1="0" y1="0" x2="0" y2="1"><stop offset="0" stop-color="#c0dcf9"/><stop offset="1" stop-color="#9fc5f0"/></linearGradient></defs><path d="M3.500 2.500V1.800q0-1.300 1.300-1.300h3q1.300 0 1.300 1.300v0.700z" fill="#f5dfa8" stroke="#b4ad9c" stroke-width="0.900"/><path d="M1.500 3v7.200q0 1.300 1.300 1.300h9.400q1.300 0 1.300 -1.300v-7.200z" fill="url(#gFC_41)" stroke="#4058b4" stroke-width="0.900"/><path d="M0.300 2.800h14.200" stroke="#77768c" stroke-width="1"/></svg><div class="t" style="left:46.2px;top:173px;letter-spacing:-0.252px;">EnchantIntensePack Rework</div><svg style="left:11px;top:195.5px" width="6" height="10" viewBox="0 0 6 10"><path d="M0.800 0.800L4.900 4.700L0.800 8.600" stroke="#a0a0a0" stroke-width="1.700" fill="none"/></svg><svg style="left:25px;top:191px" width="16" height="16" viewBox="0 0 16 16"><path d="M1.500 6h9v2.500h-6l-3 4.500z" fill="#fbe9b8" stroke="#e8cf94" stroke-width="0.600"/><path d="M1.300 7.500v6" stroke="#4a5cb4" stroke-width="0.900"/><path d="M2.500 13.500h9l4-5h-11z" fill="#b3d2f5" stroke="#3b4fb0" stroke-width="1" stroke-linejoin="round"/><path d="M14.700 0.300v4.700q0 1.500-1.500 1.500q-1.300 0-1.700-1" stroke="#3a6aa2" stroke-width="1.100" fill="none"/><path d="M1.500 4.800v-3.400l1.900 2.300l1.900-2.300v3.400" stroke="#1f5a9a" stroke-width="1.300" fill="none" stroke-linejoin="miter"/><path d="M6.300 2.800h1.400v1.600h1" stroke="#d9b23e" stroke-width="0.900" fill="none"/><path d="M3.500 8.300l3.300 6.200q0.300 1-1 1h-4.600q-1.300 0-1-1z" fill="#f6c654" stroke="#d39a2c" stroke-width="0.800" stroke-linejoin="round"/><path d="M3.500 10.300v2.700M3.500 13.700v0.900" stroke="#2a1c00" stroke-width="1.100"/></svg><div class="t" style="left:46.2px;top:191px;letter-spacing:-0.036px;">EnchantmentMiscPro</div><svg style="left:25px;top:209px" width="16" height="16" viewBox="0 0 16 16"><defs><linearGradient id="gFC_43" x1="0" y1="0" x2="0" y2="1"><stop offset="0" stop-color="#c0dcf9"/><stop offset="1" stop-color="#9fc5f0"/></linearGradient></defs><path d="M3.500 2.500V1.800q0-1.300 1.300-1.300h3q1.300 0 1.300 1.300v0.700z" fill="#f5dfa8" stroke="#b4ad9c" stroke-width="0.900"/><path d="M1.500 3v7.200q0 1.300 1.300 1.300h9.400q1.300 0 1.300 -1.300v-7.200z" fill="url(#gFC_43)" stroke="#4058b4" stroke-width="0.900"/><path d="M0.300 2.800h14.200" stroke="#77768c" stroke-width="1"/></svg><div class="t" style="left:46.2px;top:209px;letter-spacing:-0.401px;">ExpBoosterPro</div><svg style="left:11px;top:231.5px" width="6" height="10" viewBox="0 0 6 10"><path d="M0.800 0.800L4.900 4.700L0.800 8.600" stroke="#a0a0a0" stroke-width="1.700" fill="none"/></svg><svg style="left:25px;top:227px" width="16" height="16" viewBox="0 0 16 16"><path d="M3.500 4.500V3.500q0-1 1-1h3.500q1 0 1 1v1" fill="#fbf0cf" stroke="#d4b06a" stroke-width="0.900"/><path d="M1.200 5h8.500v3.500h-5.200l-3.300 4.500z" fill="#fbe9b8" stroke="#e8cf94" stroke-width="0.600"/><path d="M0 4.600h9.500" stroke="#7b7186" stroke-width="1"/><path d="M1.300 5.500v8" stroke="#4a5cb4" stroke-width="0.900"/><path d="M1.500 13.500h10l4-5h-11z" fill="#b3d2f5" stroke="#3b4fb0" stroke-width="1" stroke-linejoin="round"/><path d="M14.700 0.300v4.700q0 1.500-1.500 1.500q-1.300 0-1.700-1" stroke="#3a6aa2" stroke-width="1.100" fill="none"/></svg><div class="t" style="left:46.2px;top:227px;letter-spacing:0.066px;">HopperLimit-ASkyBlock Addon</div><svg style="left:11px;top:249.5px" width="6" height="10" viewBox="0 0 6 10"><path d="M0.800 0.800L4.900 4.700L0.800 8.600" stroke="#a0a0a0" stroke-width="1.700" fill="none"/></svg><svg style="left:25px;top:245px" width="16" height="16" viewBox="0 0 16 16"><path d="M3.500 4.500V3.500q0-1 1-1h3.500q1 0 1 1v1" fill="#fbf0cf" stroke="#d4b06a" stroke-width="0.900"/><path d="M1.200 5h8.500v3.500h-5.200l-3.300 4.500z" fill="#fbe9b8" stroke="#e8cf94" stroke-width="0.600"/><path d="M0 4.600h9.500" stroke="#7b7186" stroke-width="1"/><path d="M1.300 5.500v8" stroke="#4a5cb4" stroke-width="0.900"/><path d="M1.500 13.500h10l4-5h-11z" fill="#b3d2f5" stroke="#3b4fb0" stroke-width="1" stroke-linejoin="round"/><path d="M14.700 0.300v4.700q0 1.500-1.500 1.500q-1.300 0-1.700-1" stroke="#3a6aa2" stroke-width="1.100" fill="none"/></svg><div class="t" style="left:46.2px;top:245px;letter-spacing:-0.036px;">ItemLocker</div><svg style="left:11px;top:267.5px" width="6" height="10" viewBox="0 0 6 10"><path d="M0.800 0.800L4.900 4.700L0.800 8.600" stroke="#a0a0a0" stroke-width="1.700" fill="none"/></svg><svg style="left:25px;top:263px" width="16" height="16" viewBox="0 0 16 16"><path d="M3.500 4.500V3.500q0-1 1-1h3.500q1 0 1 1v1" fill="#fbf0cf" stroke="#d4b06a" stroke-width="0.900"/><path d="M1.200 5h8.500v3.500h-5.200l-3.300 4.500z" fill="#fbe9b8" stroke="#e8cf94" stroke-width="0.600"/><path d="M0 4.600h9.500" stroke="#7b7186" stroke-width="1"/><path d="M1.300 5.500v8" stroke="#4a5cb4" stroke-width="0.900"/><path d="M1.500 13.500h10l4-5h-11z" fill="#b3d2f5" stroke="#3b4fb0" stroke-width="1" stroke-linejoin="round"/><path d="M14.700 0.300v4.700q0 1.500-1.500 1.500q-1.300 0-1.700-1" stroke="#3a6aa2" stroke-width="1.100" fill="none"/><path d="M3.500 8.300l3.300 6.200q0.300 1-1 1h-4.600q-1.300 0-1-1z" fill="#f6c654" stroke="#d39a2c" stroke-width="0.800" stroke-linejoin="round"/><path d="M3.500 10.300v2.700M3.500 13.700v0.900" stroke="#2a1c00" stroke-width="1.100"/></svg><div class="t" style="left:46.2px;top:263px;letter-spacing:-0.116px;">ItemSystem</div><svg style="left:11px;top:285.5px" width="6" height="10" viewBox="0 0 6 10"><path d="M0.800 0.800L4.900 4.700L0.800 8.600" stroke="#a0a0a0" stroke-width="1.700" fill="none"/></svg><svg style="left:25px;top:281px" width="16" height="16" viewBox="0 0 16 16"><path d="M1.500 6h9v2.500h-6l-3 4.500z" fill="#fbe9b8" stroke="#e8cf94" stroke-width="0.600"/><path d="M1.300 7.500v6" stroke="#4a5cb4" stroke-width="0.900"/><path d="M2.500 13.500h9l4-5h-11z" fill="#b3d2f5" stroke="#3b4fb0" stroke-width="1" stroke-linejoin="round"/><path d="M14.700 0.300v4.700q0 1.500-1.500 1.500q-1.300 0-1.700-1" stroke="#3a6aa2" stroke-width="1.100" fill="none"/><path d="M1.500 4.800v-3.400l1.900 2.300l1.900-2.300v3.400" stroke="#1f5a9a" stroke-width="1.300" fill="none" stroke-linejoin="miter"/><path d="M6.300 2.800h1.400v1.600h1" stroke="#d9b23e" stroke-width="0.900" fill="none"/><path d="M3.500 8.300l3.300 6.200q0.300 1-1 1h-4.600q-1.300 0-1-1z" fill="#f6c654" stroke="#d39a2c" stroke-width="0.800" stroke-linejoin="round"/><path d="M3.500 10.300v2.700M3.500 13.700v0.900" stroke="#2a1c00" stroke-width="1.100"/></svg><div class="t" style="left:46.2px;top:281px;letter-spacing:-0.071px;">ItemSystemTools</div><svg style="left:25px;top:299px" width="16" height="16" viewBox="0 0 16 16"><defs><linearGradient id="gFC_48" x1="0" y1="0" x2="0" y2="1"><stop offset="0" stop-color="#c0dcf9"/><stop offset="1" stop-color="#9fc5f0"/></linearGradient></defs><path d="M3.500 2.500V1.800q0-1.300 1.300-1.300h3q1.300 0 1.300 1.300v0.700z" fill="#f5dfa8" stroke="#b4ad9c" stroke-width="0.900"/><path d="M1.500 3v7.200q0 1.300 1.300 1.300h9.400q1.300 0 1.300 -1.300v-7.200z" fill="url(#gFC_48)" stroke="#4058b4" stroke-width="0.900"/><path d="M0.300 2.800h14.200" stroke="#77768c" stroke-width="1"/></svg><div class="t" style="left:46.2px;top:299px;letter-spacing:-0.009px;">KhuyenMaiNapThe</div><svg style="left:11px;top:321.5px" width="6" height="10" viewBox="0 0 6 10"><path d="M0.800 0.800L4.900 4.700L0.800 8.600" stroke="#a0a0a0" stroke-width="1.700" fill="none"/></svg><svg style="left:25px;top:317px" width="16" height="16" viewBox="0 0 16 16"><path d="M1.500 6h9v2.500h-6l-3 4.500z" fill="#fbe9b8" stroke="#e8cf94" stroke-width="0.600"/><path d="M1.300 7.500v6" stroke="#4a5cb4" stroke-width="0.900"/><path d="M2.500 13.500h9l4-5h-11z" fill="#b3d2f5" stroke="#3b4fb0" stroke-width="1" stroke-linejoin="round"/><path d="M14.700 0.300v4.700q0 1.500-1.500 1.500q-1.300 0-1.700-1" stroke="#3a6aa2" stroke-width="1.100" fill="none"/><path d="M1.500 4.800v-3.400l1.900 2.300l1.900-2.300v3.400" stroke="#1f5a9a" stroke-width="1.300" fill="none" stroke-linejoin="miter"/><path d="M6.300 2.800h1.400v1.600h1" stroke="#d9b23e" stroke-width="0.900" fill="none"/></svg><div class="t" style="left:46.2px;top:317px;letter-spacing:-0.103px;">MobCashPro</div><svg style="left:11px;top:339.5px" width="6" height="10" viewBox="0 0 6 10"><path d="M0.800 0.800L4.900 4.700L0.800 8.600" stroke="#a0a0a0" stroke-width="1.700" fill="none"/></svg><svg style="left:25px;top:335px" width="16" height="16" viewBox="0 0 16 16"><path d="M3.500 4.500V3.500q0-1 1-1h3.500q1 0 1 1v1" fill="#fbf0cf" stroke="#d4b06a" stroke-width="0.900"/><path d="M1.200 5h8.500v3.500h-5.200l-3.300 4.500z" fill="#fbe9b8" stroke="#e8cf94" stroke-width="0.600"/><path d="M0 4.600h9.500" stroke="#7b7186" stroke-width="1"/><path d="M1.300 5.500v8" stroke="#4a5cb4" stroke-width="0.900"/><path d="M1.500 13.500h10l4-5h-11z" fill="#b3d2f5" stroke="#3b4fb0" stroke-width="1" stroke-linejoin="round"/><path d="M14.700 0.300v4.700q0 1.500-1.500 1.500q-1.300 0-1.700-1" stroke="#3a6aa2" stroke-width="1.100" fill="none"/><path d="M3.500 8.300l3.300 6.200q0.300 1-1 1h-4.600q-1.300 0-1-1z" fill="#f6c654" stroke="#d39a2c" stroke-width="0.800" stroke-linejoin="round"/><path d="M3.500 10.300v2.700M3.500 13.700v0.900" stroke="#2a1c00" stroke-width="1.100"/></svg><div class="t" style="left:46.2px;top:335px;letter-spacing:-0.263px;">NapThe e1.0</div><svg style="left:25px;top:353px" width="16" height="16" viewBox="0 0 16 16"><defs><linearGradient id="gFC_51" x1="0" y1="0" x2="0" y2="1"><stop offset="0" stop-color="#c0dcf9"/><stop offset="1" stop-color="#9fc5f0"/></linearGradient></defs><path d="M3.500 2.500V1.800q0-1.300 1.300-1.300h3q1.300 0 1.300 1.300v0.700z" fill="#f5dfa8" stroke="#b4ad9c" stroke-width="0.900"/><path d="M1.500 3v7.200q0 1.300 1.300 1.300h9.400q1.300 0 1.300 -1.300v-7.200z" fill="url(#gFC_51)" stroke="#4058b4" stroke-width="0.900"/><path d="M0.300 2.800h14.200" stroke="#77768c" stroke-width="1"/></svg><div class="t" style="left:46.2px;top:353px;letter-spacing:-0.308px;">PLib</div><svg style="left:11px;top:375.5px" width="6" height="10" viewBox="0 0 6 10"><path d="M0.800 0.800L4.900 4.700L0.800 8.600" stroke="#a0a0a0" stroke-width="1.700" fill="none"/></svg><svg style="left:25px;top:371px" width="16" height="16" viewBox="0 0 16 16"><path d="M1.500 6h9v2.500h-6l-3 4.500z" fill="#fbe9b8" stroke="#e8cf94" stroke-width="0.600"/><path d="M1.300 7.500v6" stroke="#4a5cb4" stroke-width="0.900"/><path d="M2.500 13.500h9l4-5h-11z" fill="#b3d2f5" stroke="#3b4fb0" stroke-width="1" stroke-linejoin="round"/><path d="M14.700 0.300v4.700q0 1.500-1.500 1.500q-1.300 0-1.700-1" stroke="#3a6aa2" stroke-width="1.100" fill="none"/><path d="M1.500 4.800v-3.400l1.900 2.300l1.900-2.300v3.400" stroke="#1f5a9a" stroke-width="1.300" fill="none" stroke-linejoin="miter"/><path d="M6.300 2.800h1.400v1.600h1" stroke="#d9b23e" stroke-width="0.900" fill="none"/></svg><div class="t" style="left:46.2px;top:371px;letter-spacing:-0.138px;">RandomOreBoosted</div><svg style="left:11px;top:393.5px" width="6" height="10" viewBox="0 0 6 10"><path d="M0.800 0.800L4.900 4.700L0.800 8.600" stroke="#a0a0a0" stroke-width="1.700" fill="none"/></svg><svg style="left:25px;top:389px" width="16" height="16" viewBox="0 0 16 16"><path d="M3.500 4.500V3.500q0-1 1-1h3.500q1 0 1 1v1" fill="#fbf0cf" stroke="#d4b06a" stroke-width="0.900"/><path d="M1.200 5h8.500v3.500h-5.200l-3.300 4.500z" fill="#fbe9b8" stroke="#e8cf94" stroke-width="0.600"/><path d="M0 4.600h9.500" stroke="#7b7186" stroke-width="1"/><path d="M1.300 5.500v8" stroke="#4a5cb4" stroke-width="0.900"/><path d="M1.500 13.500h10l4-5h-11z" fill="#b3d2f5" stroke="#3b4fb0" stroke-width="1" stroke-linejoin="round"/><path d="M14.700 0.300v4.700q0 1.500-1.500 1.500q-1.300 0-1.700-1" stroke="#3a6aa2" stroke-width="1.100" fill="none"/><path d="M3.500 8.300l3.300 6.200q0.300 1-1 1h-4.600q-1.300 0-1-1z" fill="#f6c654" stroke="#d39a2c" stroke-width="0.800" stroke-linejoin="round"/><path d="M3.500 10.300v2.700M3.500 13.700v0.900" stroke="#2a1c00" stroke-width="1.100"/></svg><div class="t" style="left:46.2px;top:389px;letter-spacing:-0.659px;">RPGCore</div><svg style="left:11px;top:411.5px" width="6" height="10" viewBox="0 0 6 10"><path d="M0.800 0.800L4.900 4.700L0.800 8.600" stroke="#a0a0a0" stroke-width="1.700" fill="none"/></svg><svg style="left:25px;top:407px" width="16" height="16" viewBox="0 0 16 16"><path d="M3.500 4.500V3.500q0-1 1-1h3.500q1 0 1 1v1" fill="#fbf0cf" stroke="#d4b06a" stroke-width="0.900"/><path d="M1.200 5h8.500v3.500h-5.200l-3.300 4.500z" fill="#fbe9b8" stroke="#e8cf94" stroke-width="0.600"/><path d="M0 4.600h9.500" stroke="#7b7186" stroke-width="1"/><path d="M1.300 5.500v8" stroke="#4a5cb4" stroke-width="0.900"/><path d="M1.500 13.500h10l4-5h-11z" fill="#b3d2f5" stroke="#3b4fb0" stroke-width="1" stroke-linejoin="round"/><path d="M14.700 0.300v4.700q0 1.500-1.500 1.500q-1.300 0-1.700-1" stroke="#3a6aa2" stroke-width="1.100" fill="none"/><path d="M3.500 8.300l3.300 6.200q0.300 1-1 1h-4.600q-1.300 0-1-1z" fill="#f6c654" stroke="#d39a2c" stroke-width="0.800" stroke-linejoin="round"/><path d="M3.500 10.300v2.700M3.500 13.700v0.900" stroke="#2a1c00" stroke-width="1.100"/></svg><div class="t" style="left:46.2px;top:407px;letter-spacing:-0.416px;">ServerCore</div><svg style="left:25px;top:425px" width="16" height="16" viewBox="0 0 16 16"><defs><linearGradient id="gFC_55" x1="0" y1="0" x2="0" y2="1"><stop offset="0" stop-color="#c0dcf9"/><stop offset="1" stop-color="#9fc5f0"/></linearGradient></defs><path d="M3.500 2.500V1.800q0-1.300 1.300-1.300h3q1.300 0 1.300 1.300v0.700z" fill="#f5dfa8" stroke="#b4ad9c" stroke-width="0.900"/><path d="M1.500 3v7.200q0 1.300 1.300 1.300h9.400q1.300 0 1.300 -1.300v-7.200z" fill="url(#gFC_55)" stroke="#4058b4" stroke-width="0.900"/><path d="M0.300 2.800h14.200" stroke="#77768c" stroke-width="1"/></svg><div class="t" style="left:46.2px;top:425px;letter-spacing:-0.246px;">ServerRankPremium</div><svg style="left:11px;top:447.5px" width="6" height="10" viewBox="0 0 6 10"><path d="M0.800 0.800L4.900 4.700L0.800 8.600" stroke="#a0a0a0" stroke-width="1.700" fill="none"/></svg><svg style="left:25px;top:443px" width="16" height="16" viewBox="0 0 16 16"><path d="M3.500 4.500V3.500q0-1 1-1h3.500q1 0 1 1v1" fill="#fbf0cf" stroke="#d4b06a" stroke-width="0.900"/><path d="M1.200 5h8.500v3.500h-5.200l-3.300 4.500z" fill="#fbe9b8" stroke="#e8cf94" stroke-width="0.600"/><path d="M0 4.600h9.500" stroke="#7b7186" stroke-width="1"/><path d="M1.300 5.500v8" stroke="#4a5cb4" stroke-width="0.900"/><path d="M1.500 13.500h10l4-5h-11z" fill="#b3d2f5" stroke="#3b4fb0" stroke-width="1" stroke-linejoin="round"/><path d="M14.700 0.300v4.700q0 1.500-1.500 1.500q-1.300 0-1.700-1" stroke="#3a6aa2" stroke-width="1.100" fill="none"/></svg><div class="t" style="left:46.2px;top:443px;letter-spacing:-0.167px;">SuperGift</div><svg style="left:11px;top:465.5px" width="6" height="10" viewBox="0 0 6 10"><path d="M0.800 0.800L4.900 4.700L0.800 8.600" stroke="#a0a0a0" stroke-width="1.700" fill="none"/></svg><svg style="left:25px;top:461px" width="16" height="16" viewBox="0 0 16 16"><path d="M3.500 4.500V3.500q0-1 1-1h3.500q1 0 1 1v1" fill="#fbf0cf" stroke="#d4b06a" stroke-width="0.900"/><path d="M1.200 5h8.500v3.500h-5.200l-3.300 4.500z" fill="#fbe9b8" stroke="#e8cf94" stroke-width="0.600"/><path d="M0 4.600h9.500" stroke="#7b7186" stroke-width="1"/><path d="M1.300 5.500v8" stroke="#4a5cb4" stroke-width="0.900"/><path d="M1.500 13.500h10l4-5h-11z" fill="#b3d2f5" stroke="#3b4fb0" stroke-width="1" stroke-linejoin="round"/><path d="M14.700 0.300v4.700q0 1.500-1.500 1.500q-1.300 0-1.700-1" stroke="#3a6aa2" stroke-width="1.100" fill="none"/><path d="M3.500 8.300l3.300 6.200q0.300 1-1 1h-4.600q-1.300 0-1-1z" fill="#f6c654" stroke="#d39a2c" stroke-width="0.800" stroke-linejoin="round"/><path d="M3.500 10.300v2.700M3.500 13.700v0.900" stroke="#2a1c00" stroke-width="1.100"/></svg><div class="t" style="left:46.2px;top:461px;letter-spacing:-0.077px;">Test Thuat Toan</div></div><div class="a" id="ed"><div class="a" id="edhead"></div><div class="a" id="edtab"></div><svg style="left:6.5px;top:5px" width="16" height="16" viewBox="0 0 16 16"><defs><linearGradient id="gJF_58" x1="0" y1="0" x2="0" y2="1"><stop offset="0" stop-color="#ffffff"/><stop offset="1" stop-color="#dfe9f8"/></linearGradient></defs><path d="M0.600 1.600h7.200l3.600 3.600v9.200h-10.800z" fill="url(#gJF_58)" stroke="#a8893a" stroke-width="1.200"/><path d="M7.800 1.600l3.600 3.600h-3.600z" fill="#e8c979"/><path d="M7.300 4.500v5.300q0 2.100-2 2.100q-1.400 0-1.900-1" stroke="#2c5f9e" stroke-width="1.700" fill="none"/></svg><div class="t" style="left:23.8px;top:5px;letter-spacing:-0.102px;">ItemUtils.java</div><svg style="left:103px;top:8px" width="10" height="10" viewBox="0 0 11 11"><path d="M0.500 0.500h2.500l2.500 2.500l2.500 -2.500h2.500v1.500l-3 3.500l3 3.500v1.500h-2.500l-2.500 -2.500l-2.500 2.500h-2.500v-1.500l3 -3.500l-3 -3.500z" stroke="#5f5f5f" stroke-width="1" fill="#fff" stroke-linejoin="miter"/></svg><svg style="left:126.5px;top:5px" width="16" height="16" viewBox="0 0 16 16"><defs><linearGradient id="gJF_59" x1="0" y1="0" x2="0" y2="1"><stop offset="0" stop-color="#ffffff"/><stop offset="1" stop-color="#dfe9f8"/></linearGradient></defs><path d="M0.600 1.600h7.200l3.600 3.600v9.200h-10.800z" fill="url(#gJF_59)" stroke="#a8893a" stroke-width="1.200"/><path d="M7.800 1.600l3.600 3.600h-3.600z" fill="#e8c979"/><path d="M7.300 4.500v5.300q0 2.100-2 2.100q-1.400 0-1.900-1" stroke="#2c5f9e" stroke-width="1.700" fill="none"/></svg><div class="t" style="left:144.7px;top:5px;letter-spacing:-0.186px;">InventorySerializer.java</div><svg style="left:1470px;top:7px" width="10" height="4" viewBox="0 0 10 4"><rect x="0.500" y="0.500" width="9" height="3" fill="#fff" stroke="#555"/></svg><svg style="left:1493px;top:7px" width="10" height="10" viewBox="0 0 10 10"><rect x="0.500" y="0.500" width="9" height="9" fill="#fff" stroke="#555"/><path d="M0 2.500h10" stroke="#555"/></svg><div class="a" id="gutter"></div><div class="a" style="left:44px;top:27px;width:1px;height:892px;background:#f3f3f3"></div><div class="a" id="code"><div class="ln" style="top:-7px">163</div><div class="ln" style="top:8px">164</div><div class="cl" style="top:8px">        <span class="k">if</span> (<span class="v">textures</span>.<span class="f">length</span> == 2) {</div><div class="ln" style="top:23px">165</div><div class="cl" style="top:23px">            <span class="k">if</span> (<span class="v">item</span>.getType() == Material.<span class="c">MONSTER_EGG</span>) {</div><div class="ln" style="top:38px">166</div><div class="cl" style="top:38px">                <span class="v">item</span> = <span class="i">toBukkitItemStack</span>(<span class="v">item</span>);</div><div class="ln" style="top:53px">167</div><div class="cl" style="top:53px">                NbtCompound <span class="v">nbt</span> = NbtFactory.<span class="i">asCompound</span>(NbtFactory.<span class="i">fromItemTag</span>(<span class="v">item</span>));</div><div class="ln" style="top:68px">168</div><div class="cl" style="top:68px">                <span class="v">nbt</span>.put(<span class="s">"EntityTag"</span>, NbtFactory.<span class="i">ofCompound</span>(<span class="s">"temp"</span>).put(<span class="s">"id"</span>, <span class="v">textures</span>[1]));</div><div class="ln" style="top:83px">169</div><div class="cl" style="top:83px">            } <span class="k">else</span> {</div><div class="ln" style="top:98px">170</div><div class="cl" style="top:98px">                <span class="v">item</span>.setDurability(Short.<span class="i">parseShort</span>(<span class="v">textures</span>[1]));</div><div class="ln" style="top:113px">171</div><div class="ln" style="top:128px">172</div><div class="cl" style="top:128px">                <span class="k">if</span> (<span class="i">isItemHasDurability</span>(<span class="v">item</span>)) {</div><div class="ln" style="top:143px">173</div><div class="cl" style="top:143px">                    <span class="v">item</span> = <span class="i">setTag</span>(<span class="v">item</span>, <span class="c">UNBREAKABLE_TAG</span>, <span class="s">"1"</span>, <span class="k">false</span>);</div><div class="ln" style="top:158px">174</div><div class="cl" style="top:158px">                    <span class="v">item</span> = <span class="i">setTag</span>(<span class="v">item</span>, <span class="c">HIDE_FLAGS_TAG</span>, <span class="s">"63"</span>, <span class="k">false</span>);</div><div class="ln" style="top:173px">175</div><div class="cl" style="top:173px">                }</div><div class="ln" style="top:188px">176</div><div class="cl" style="top:188px">            }</div><div class="ln" style="top:203px">177</div><div class="cl" style="top:203px">        }</div><div class="ln" style="top:218px">178</div><div class="ln" style="top:233px">179</div><div class="cl" style="top:233px">        <span class="k">return</span> <span class="v">item</span>;</div><div class="ln" style="top:248px">180</div><div class="cl" style="top:248px">    }</div><div class="ln" style="top:263px">181</div><div class="ln" style="top:278px">182</div><div class="cl" style="top:278px">    <span class="k">private</span> <span class="k">static</span> <span class="k">boolean</span> isItemHasDurability(ItemStack <span class="v">item</span>) {</div><div class="ln" style="top:293px">183</div><div class="cl" style="top:293px">        <span class="k">return</span> <span class="c">itemsWithDurability</span>.contains(<span class="v">item</span>.getType());</div><div class="ln" style="top:308px">184</div><div class="cl" style="top:308px">    }</div><div class="ln" style="top:323px">185</div><div class="ln" style="top:338px">186</div><div class="cl" style="top:338px">    <span class="k">public</span> <span class="k">static</span> NbtCompound itemStackToNBT(ItemStack <span class="v">originalItem</span>, String <span class="v">name</span>) {</div><div class="ln" style="top:353px">187</div><div class="cl" style="top:353px">        NbtCompound <span class="v">nbt</span> = NbtFactory.<span class="i">ofCompound</span>(<span class="v">name</span>);</div><div class="ln" style="top:368px">188</div><div class="ln" style="top:383px">189</div><div class="cl" style="top:383px">        <span class="v">nbt</span>.put(<span class="s">"material"</span>, <span class="v">originalItem</span>.getType().name());</div><div class="ln" style="top:398px">190</div><div class="cl" style="top:398px">        <span class="v">nbt</span>.put(<span class="s">"amount"</span>, <span class="v">originalItem</span>.getAmount());</div><div class="ln" style="top:413px">191</div><div class="cl" style="top:413px">        <span class="v">nbt</span>.put(<span class="s">"data"</span>, <span class="v">originalItem</span>.getDurability());</div><div class="ln" style="top:428px">192</div><div class="ln" style="top:443px">193</div><div class="cl" style="top:443px">        ItemStack <span class="v">item</span> = <span class="i">toBukkitItemStack</span>(<span class="v">originalItem</span>.clone());</div><div class="ln" style="top:458px">194</div><div class="cl" style="top:458px">        NbtCompound <span class="v">tag</span> = ItemUtils.<span class="i">isEmpty</span>(<span class="v">item</span>) ? <span class="k">null</span> : NbtFactory.<span class="i">asCompound</span>(NbtFactory.<span class="i">fromItemTag</span>(<span class="v">item</span>));</div><div class="ln" style="top:473px">195</div><div class="cl" style="top:473px">        <span class="k">if</span> (<span class="v">tag</span> != <span class="k">null</span>) {</div><div class="ln" style="top:488px">196</div><div class="cl" style="top:488px">            <span class="v">nbt</span>.put(<span class="s">"tag"</span>, <span class="v">tag</span>);</div><div class="ln" style="top:503px">197</div><div class="cl" style="top:503px">        }</div><div class="ln" style="top:518px">198</div><div class="ln" style="top:533px">199</div><div class="cl" style="top:533px">        <span class="k">return</span> <span class="v">nbt</span>;</div><div class="ln" style="top:548px">200</div><div class="cl" style="top:548px">    }</div><div class="ln" style="top:563px">201</div><div class="ln" style="top:578px">202</div><div class="cl" style="top:578px">    <span class="k">public</span> <span class="k">static</span> ItemStack nbtToItemStack(NbtCompound <span class="v">nbt</span>) {</div><div class="ln" style="top:593px">203</div><div class="cl" style="top:593px">        ItemStack <span class="v">item</span> = <span class="k">new</span> ItemStack(Material.<span class="i">valueOf</span>(<span class="v">nbt</span>.getString(<span class="s">"material"</span>)));</div><div class="ln" style="top:608px">204</div><div class="ln" style="top:623px">205</div><div class="cl" style="top:623px">        <span class="k">if</span> (!ItemUtils.<span class="i">isEmpty</span>(<span class="v">item</span>)) {</div><div class="ln" style="top:638px">206</div><div class="cl" style="top:638px">            <span class="v">item</span>.setAmount(<span class="v">nbt</span>.getInteger(<span class="s">"amount"</span>));</div><div class="ln" style="top:653px">207</div><div class="cl" style="top:653px">            <span class="v">item</span>.setDurability(<span class="v">nbt</span>.getShort(<span class="s">"data"</span>));</div><div class="ln" style="top:668px">208</div><div class="ln" style="top:683px">209</div><div class="cl" style="top:683px">            <span class="k">if</span> (<span class="v">nbt</span>.containsKey(<span class="s">"tag"</span>)) {</div><div class="ln" style="top:698px">210</div><div class="cl" style="top:698px">                <span class="v">item</span> = <span class="i">toBukkitItemStack</span>(<span class="v">item</span>);</div><div class="ln" style="top:713px">211</div><div class="cl" style="top:713px">                NbtFactory.<span class="i">setItemTag</span>(<span class="v">item</span>, <span class="v">nbt</span>.getCompound(<span class="s">"tag"</span>));</div><div class="ln" style="top:728px">212</div><div class="cl" style="top:728px">            }</div><div class="ln" style="top:743px">213</div><div class="cl" style="top:743px">        }</div><div class="ln" style="top:758px">214</div><div class="ln" style="top:773px">215</div><div class="cl" style="top:773px">        <span class="k">return</span> <span class="v">item</span>;</div><div class="ln" style="top:788px">216</div><div class="cl" style="top:788px">    }</div><div class="ln" style="top:803px">217</div><div class="ln" style="top:818px">218</div><div class="cl" style="top:818px">    <span class="k">public</span> <span class="k">static</span> ItemStack[] syncItems(ItemStack[] <span class="v">items</span>) {</div><div class="ln" style="top:833px">219</div><div class="cl" style="top:833px">        <span class="k">for</span> (<span class="k">int</span> <span class="v">i</span> = 0; <span class="v">i</span> &lt; <span class="v">items</span>.<span class="f">length</span>; <span class="v">i</span>++) {</div><div class="ln" style="top:848px">220</div><div class="cl" style="top:848px">            <span class="v">items</span>[<span class="v">i</span>] = ItemUtils.<span class="i">syncItem</span>(<span class="v">items</span>[<span class="v">i</span>]);</div><div class="ln" style="top:863px">221</div><div class="cl" style="top:863px">        }</div><div class="ln" style="top:878px">222</div><svg style="left:34.400px;top:279.4px" width="10" height="10" viewBox="0 0 10 10"><circle cx="5" cy="5" r="4.100" fill="#d6e3f3" stroke="#b4c6de" stroke-width="0.800"/><path d="M2.500 5h5" stroke="#5c5c5c" stroke-width="1.200"/></svg><svg style="left:34.400px;top:339.4px" width="10" height="10" viewBox="0 0 10 10"><circle cx="5" cy="5" r="4.100" fill="#d6e3f3" stroke="#b4c6de" stroke-width="0.800"/><path d="M2.500 5h5" stroke="#5c5c5c" stroke-width="1.200"/></svg><svg style="left:34.400px;top:579.4px" width="10" height="10" viewBox="0 0 10 10"><circle cx="5" cy="5" r="4.100" fill="#d6e3f3" stroke="#b4c6de" stroke-width="0.800"/><path d="M2.500 5h5" stroke="#5c5c5c" stroke-width="1.200"/></svg><svg style="left:34.400px;top:819.4px" width="10" height="10" viewBox="0 0 10 10"><circle cx="5" cy="5" r="4.100" fill="#d6e3f3" stroke="#b4c6de" stroke-width="0.800"/><path d="M2.500 5h5" stroke="#5c5c5c" stroke-width="1.200"/></svg></div><div class="a" id="vsb"></div><div class="a" id="ovr"></div><div class="a" id="hsb"></div><div class="a" id="gutter2"></div><div class="a" id="thumb"></div><svg style="left:1490px;top:33px" width="9" height="6" viewBox="0 0 9 6"><path d="M0.700 5.200L4.500 1.300L8.300 5.200" stroke="#505050" stroke-width="1.600" fill="none"/></svg><svg style="left:1490px;top:907px" width="9" height="6" viewBox="0 0 9 6"><path d="M0.700 0.800L4.500 4.700L8.300 0.800" stroke="#505050" stroke-width="1.600" fill="none"/></svg><svg style="left:52px;top:923px" width="6" height="9" viewBox="0 0 6 9"><path d="M5.200 0.700L1.300 4.500L5.200 8.300" stroke="#b0b0b0" stroke-width="1.500" fill="none"/></svg><svg style="left:1474px;top:923px" width="6" height="9" viewBox="0 0 6 9"><path d="M0.800 0.700L4.700 4.500L0.800 8.300" stroke="#b0b0b0" stroke-width="1.500" fill="none"/></svg></div><div class="a" style="left:1887px;top:75px;width:33px;height:81px;background:#e1e6f6;border:1px solid #b3bad3;border-radius:4px 4px 6px 6px;box-shadow:inset 1px 1px 0 #f6f8fd,inset -1px -1px 0 #f6f8fd,0 0 0 1px #edf0fa"></div><svg style="left:1894px;top:81.5px" width="19" height="3" viewBox="0 0 19 3"><rect x="0" y="0" width="2" height="1.500" fill="#a7a9b4"/><rect x="0.5" y="1.500" width="2.500" height="1" fill="#fbfcff"/><rect x="5" y="0" width="2" height="1.500" fill="#a7a9b4"/><rect x="5.5" y="1.500" width="2.500" height="1" fill="#fbfcff"/><rect x="10.5" y="0" width="2" height="1.500" fill="#a7a9b4"/><rect x="11.0" y="1.500" width="2.500" height="1" fill="#fbfcff"/><rect x="15.5" y="0" width="2" height="1.500" fill="#a7a9b4"/><rect x="16.0" y="1.500" width="2.500" height="1" fill="#fbfcff"/></svg><svg style="left:1898px;top:91px" width="16" height="16" viewBox="0 0 16 16"><rect x="3.500" y="1.500" width="5" height="4" fill="#fff" stroke="#5a5248"/><path d="M3.500 2.500h5" stroke="#5a5248"/><rect x="1.500" y="4.500" width="5" height="4" fill="#fff" stroke="#5a5248"/><path d="M1.500 5.500h5" stroke="#5a5248"/></svg><svg style="left:1895.5px;top:109.5px" width="16" height="16" viewBox="0 0 16 16"><circle cx="4" cy="2.500" r="2" fill="#6a9bd8" stroke="#2f5fa8" stroke-width="0.700"/><path d="M1.500 6q2.500-1.500 4 0v9h-3.500z" fill="#6a9bd8" stroke="#2f5fa8" stroke-width="0.700"/><circle cx="10" cy="9" r="5" fill="#fff" stroke="#2f5fa8" stroke-width="1.300"/><path d="M8.300 7.500q0-1.800 1.700-1.800t1.700 1.600q0 1-1.700 1.800v1" stroke="#2f5fa8" stroke-width="1.300" fill="none"/><rect x="9.300" y="11" width="1.400" height="1.400" fill="#2f5fa8"/></svg><svg style="left:1896.5px;top:132.5px" width="16" height="16" viewBox="0 0 16 16"><rect x="0.500" y="1.500" width="12" height="12" fill="#f4faff" stroke="#b39a5a"/><rect x="1" y="2" width="11" height="2" fill="#5a93dc"/></svg><div class="a" style="left:1887px;top:156px;width:33px;height:125px;background:#e1e6f6;border:1px solid #b3bad3;border-radius:4px 4px 6px 6px;box-shadow:inset 1px 1px 0 #f6f8fd,inset -1px -1px 0 #f6f8fd,0 0 0 1px #edf0fa"></div><svg style="left:1894px;top:162.5px" width="19" height="3" viewBox="0 0 19 3"><rect x="0" y="0" width="2" height="1.500" fill="#a7a9b4"/><rect x="0.5" y="1.500" width="2.500" height="1" fill="#fbfcff"/><rect x="5" y="0" width="2" height="1.500" fill="#a7a9b4"/><rect x="5.5" y="1.500" width="2.500" height="1" fill="#fbfcff"/><rect x="10.5" y="0" width="2" height="1.500" fill="#a7a9b4"/><rect x="11.0" y="1.500" width="2.500" height="1" fill="#fbfcff"/><rect x="15.5" y="0" width="2" height="1.500" fill="#a7a9b4"/><rect x="16.0" y="1.500" width="2.500" height="1" fill="#fbfcff"/></svg><svg style="left:1898px;top:172px" width="16" height="16" viewBox="0 0 16 16"><rect x="3.500" y="1.500" width="5" height="4" fill="#fff" stroke="#5a5248"/><path d="M3.500 2.500h5" stroke="#5a5248"/><rect x="1.500" y="4.500" width="5" height="4" fill="#fff" stroke="#5a5248"/><path d="M1.500 5.500h5" stroke="#5a5248"/></svg><svg style="left:1895px;top:190px" width="16" height="16" viewBox="0 0 16 16"><path d="M0.500 1.500h13q-1.800 3.500 0 7t0 7h-13z" fill="#f2f6fc" stroke="#5f79ac" stroke-width="0.900"/><path d="M8 1.500v14M0.500 8.500h12.500" stroke="#6b86b8" stroke-width="0.900"/><circle cx="4.300" cy="4.900" r="2.500" fill="#e8262a"/><path d="M2 15v-1.800q0-3 2.300-3t2.300 3v1.800z" fill="#f5a623"/></svg><svg style="left:1895px;top:213px" width="16" height="16" viewBox="0 0 16 16"><g transform="translate(8 8) scale(0.780) translate(-8 -8)"><path d="M11 6q-0.500-2-2.500-2q-3 0-3.500 3.500q-0.300 3 2 3q2 0 3-3M11.500 4l-1.200 5.500q-0.300 1.300 1 1.300q2.500-0.500 2.700-4q0-4.500-5-4.800q-5.500 0-6.500 5.500q-0.500 6 5 6q2.500 0 4-1" stroke="#2062b0" stroke-width="1.700" fill="none"/></g></svg><svg style="left:1895px;top:234px" width="16" height="16" viewBox="0 0 16 16"><path d="M1.500 0.500h7l3 3v11h-10z" fill="#fdf9ec" stroke="#b8953e" stroke-width="1.100"/><path d="M5.500 3.500q-1.500 0-1.500 1.500v1q0 1-1 1q1 0 1 1v1q0 1.500 1.500 1.500" stroke="#2f5fa8" stroke-width="1" fill="none"/><path d="M6.500 5.500h3M6.500 8h3" stroke="#2f5fa8" stroke-width="1"/><path d="M7 11.500h4v-2l4.500 3.500l-4.500 3.500v-2h-4z" fill="#fbd669" stroke="#c88a1a" stroke-width="0.900" stroke-linejoin="round"/></svg><svg style="left:1896px;top:257px" width="16" height="16" viewBox="0 0 16 16"><rect x="1" y="1" width="13" height="10" rx="1" fill="#2f5fb8"/><rect x="2.500" y="2.500" width="10" height="7" fill="#eef4fc"/><path d="M4 5h5M4 7h4" stroke="#2f5fb8" stroke-width="1"/><path d="M5.500 11v2h4v-2M2.500 14h10" stroke="#2f5fb8" stroke-width="1.600" fill="none"/></svg><div class="a" id="status"><div class="sep" style="left:1314px;top:0;height:22px"></div><div class="sep" style="left:1315px;top:0;height:22px;background:#f7f8fd"></div><div class="sep" style="left:1418px;top:0;height:22px"></div><div class="sep" style="left:1419px;top:0;height:22px;background:#f7f8fd"></div><div class="sep" style="left:1516px;top:0;height:22px"></div><div class="sep" style="left:1517px;top:0;height:22px;background:#f7f8fd"></div><div class="t" style="left:1322px;top:2.5px;letter-spacing:0.025px;">Writable</div><div class="t" style="left:1426px;top:2.5px;letter-spacing:-0.197px;">Smart Insert</div><div class="t" style="left:1524px;top:2.5px;letter-spacing:-0.672px;">1 : 1</div><svg style="left:1612px;top:6px" width="3" height="17" viewBox="0 0 3 17"><rect x="0" y="0" width="2" height="2" fill="#9b968a"/><rect x="2" y="0.5" width="1" height="2" fill="#f8f9fd"/><rect x="0" y="5.5" width="2" height="2" fill="#9b968a"/><rect x="2" y="6.0" width="1" height="2" fill="#f8f9fd"/><rect x="0" y="9.5" width="2" height="2" fill="#9b968a"/><rect x="2" y="10.0" width="1" height="2" fill="#f8f9fd"/><rect x="0" y="14" width="2" height="2" fill="#9b968a"/><rect x="2" y="14.5" width="1" height="2" fill="#f8f9fd"/></svg><svg style="left:1900px;top:6px" width="16" height="16" viewBox="0 0 16 16"><defs><linearGradient id="gRSS_68" x1="0" y1="0" x2="0" y2="1"><stop offset="0" stop-color="#f9a440"/><stop offset="1" stop-color="#f47512"/></linearGradient></defs><rect x="0" y="0" width="15" height="15" rx="2.500" fill="url(#gRSS_68)"/><circle cx="4.300" cy="10.800" r="1.500" fill="#fff"/><path d="M3 6.500q5.500 0 5.500 5.500M3 3q9 0 9 9" stroke="#fff" stroke-width="1.700" fill="none"/></svg></div><div class="a" id="bottomline"></div></body></html>
